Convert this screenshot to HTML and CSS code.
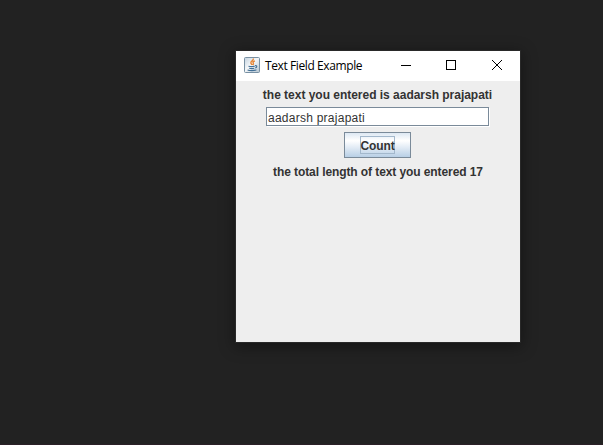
FILE: index.html
```html
<!DOCTYPE html>
<html lang="en">
<head>
<meta charset="utf-8">
<title>Text Field Example</title>
<link rel="stylesheet" href="styles.css">
</head>
<body>
<main class="window">
  <header class="titlebar">
    <svg class="app-icon" width="16" height="16" viewBox="0 0 16 16" fill="none">
      <defs><linearGradient id="tile" x1="0" y1="0" x2="1" y2="1"><stop stop-color="#c3d2df"/><stop offset=".45" stop-color="#f4f7f9"/><stop offset="1" stop-color="#b4c3cf"/></linearGradient></defs>
      <rect x=".5" y=".5" width="15" height="15" rx="1" fill="url(#tile)" stroke="#7890a3"/>
      <path d="M9.2 1.5c1 2-3 2.6-2.3 4.6.2.8 1 1.2 1.2 1.8M10.9 3.8C9.4 4.5 8.6 5 9.2 6c.5.7.3 1.3-.3 1.9" stroke="#e68637" stroke-width="1.4"/>
      <path d="M4.5 9.2c1.8.6 4.3.5 6.2 0M5.2 11.2c1.6.5 3.6.5 5 0M11 8.7c2.5-.6 2.1 1.7.3 2.2M3.6 13c2 .9 6.8.9 8.8-.3" stroke="#416f96" stroke-width="1.1"/>
    </svg>
    <h1 class="title">Text Field Example</h1>
    <div class="controls">
      <svg class="control" width="46" height="30" viewBox="0 0 46 30"><path d="M19 14.5h10" stroke="#000"/></svg>
      <svg class="control" width="46" height="30" viewBox="0 0 46 30"><rect x="18.5" y="9.5" width="9" height="9" fill="none" stroke="#000"/></svg>
      <svg class="control" width="46" height="30" viewBox="0 0 46 30"><path d="M18 9l10 10M28 9l-10 10" stroke="#000" stroke-width="1"/></svg>
    </div>
  </header>
  <section class="content">
    <p class="label entered">the text you entered is aadarsh prajapati</p>
    <input class="field" type="text" value="aadarsh prajapati" aria-label="Text">
    <button class="button" type="button"><span class="focus">Count</span></button>
    <p class="label total">the total length of text you entered 17</p>
  </section>
</main>
</body>
</html>
```
FILE: styles.css
```css
* { box-sizing: border-box; }
body {
  margin: 0;
  height: 445px;
  padding: 51px 0 0 236px;
  overflow: hidden;
  background: #222;
  border-bottom: 1px solid #2b2027;
}
.window {
  width: 284px;
  height: 291px;
  background: #eee;
  box-shadow: 0 0 0 1px #292929, 0 3px 14px 2px rgba(0, 0, 0, .38);
}
.titlebar {
  display: flex;
  align-items: center;
  height: 30px;
  padding-left: 8px;
  background: #fff;
}
.app-icon { flex: none; margin-top: -2px; }
.title {
  margin: 0 0 0 5px;
  font: 400 12px/16px "Open Sans", sans-serif;
  letter-spacing: -.4px;
  white-space: nowrap;
  color: #000;
}
.controls { display: flex; margin-left: auto; }
.control { display: block; }
.content {
  display: flex;
  flex-direction: column;
  align-items: center;
  padding: 7px 1px 0 0;
  font-family: "Liberation Sans", Arial, sans-serif;
  font-size: 12px;
  color: #333;
}
.label {
  margin: 0;
  font-weight: 700;
  line-height: 15px;
  white-space: nowrap;
}
.entered { letter-spacing: -.02px; }
.total { padding-left: 1px; letter-spacing: -.09px; }
.field {
  width: 223px;
  height: 19px;
  margin: 4px 0 6px;
  padding: 2px 1px 0;
  border: 1px solid #7a8a99;
  border-radius: 0;
  outline: 0;
  background: #fff;
  box-shadow: 1px 1px #fff;
  font: 12px/15px "Liberation Sans", Arial, sans-serif;
  letter-spacing: .25px;
  color: #333;
}
.button {
  display: flex;
  justify-content: center;
  align-items: center;
  width: 67px;
  height: 26px;
  margin: 0 0 7px;
  padding: 0;
  border: 1px solid #7a8a99;
  border-radius: 0;
  background: linear-gradient(#dde8f3 0, #fff 32%, #f5f8fc 42%, #b8cfe5 100%);
  font: 700 12px/18px "Liberation Sans", Arial, sans-serif;
  letter-spacing: -.1px;
  color: #333;
}
.focus {
  width: 35px;
  height: 18px;
  border: 1px solid #a3b8cc;
  display: flex;
  justify-content: center;
}
```
